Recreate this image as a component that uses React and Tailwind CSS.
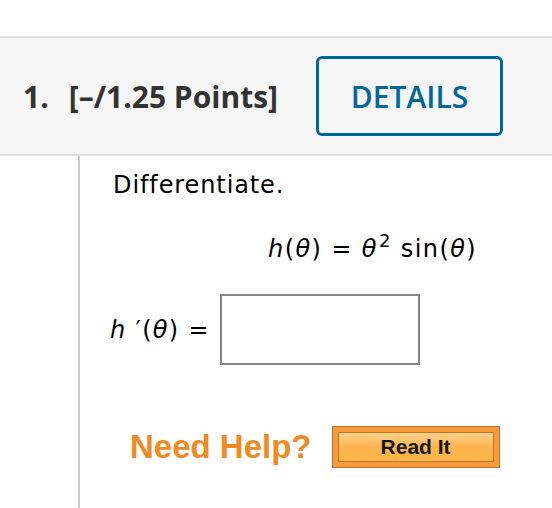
export default function App() {
  const math = { fontFamily: '"DejaVu Sans", Verdana, sans-serif', fontVariantLigatures: 'none' };
  return (
    <div className="w-[552px] h-[508px] bg-white overflow-hidden">
      <div className="h-[36px]" />
      <div className="border-t-2 border-b-2 border-[#dcdcdc] bg-[#f6f6f6] h-[120px] flex items-center pl-[23px]">
        <div className="flex items-center text-[#333333] font-bold text-[30px]" style={{ fontFamily: '"Open Sans", sans-serif' }}>
          <span>1.</span>
          <span className="ml-[20px]">[–/1.25 Points]</span>
        </div>
        <div className="ml-[38px] w-[187px] h-[80px] border-[3px] border-[#00669b] rounded-[6px] flex items-center justify-center text-[#00669b] font-semibold text-[30px]" style={{ fontFamily: '"Open Sans", sans-serif' }}>
          DETAILS
        </div>
      </div>
      <div className="ml-[78px] border-l-2 border-[#cccccc] h-[352px] pl-[33px] text-black" style={math}>
        <div className="pt-[11px] text-[24px] tracking-[0.9px]">Differentiate.</div>
        <div className="mt-[28px] pl-[155px] text-[24px] tracking-[1.4px] whitespace-nowrap">
          <i>h</i>(<i>θ</i>) = <i>θ</i><sup className="text-[18px] relative top-[-10px] ml-[1px]">2</sup> sin(<i>θ</i>)
        </div>
        <div className="mt-[27px] flex items-center text-[24px] tracking-[1.3px]">
          <span className="-ml-[3px] whitespace-nowrap"><i>h</i> ′(<i>θ</i>) =</span>
          <div className="ml-[10px] w-[200px] h-[71px] border-2 border-[#888888] bg-white" />
        </div>
        <div className="mt-[57px] flex items-center pl-[17px]">
          <span className="text-[#f08a24] font-bold text-[33px]" style={{ fontFamily: '"Liberation Sans", Arial, sans-serif' }}>Need Help?</span>
          <div className="ml-[20px] w-[168px] h-[42px] border border-[#b8702a] bg-[#f59b3b] p-[5px]">
            <div className="w-full h-full border border-[#c07a30] bg-gradient-to-b from-[#fdd28a] via-[#fdb54b] to-[#fdb44a] flex items-center justify-center text-[#141414] font-bold text-[21px]" style={{ fontFamily: '"Liberation Sans", Arial, sans-serif' }}>
              Read It
            </div>
          </div>
        </div>
      </div>
    </div>
  );
}
